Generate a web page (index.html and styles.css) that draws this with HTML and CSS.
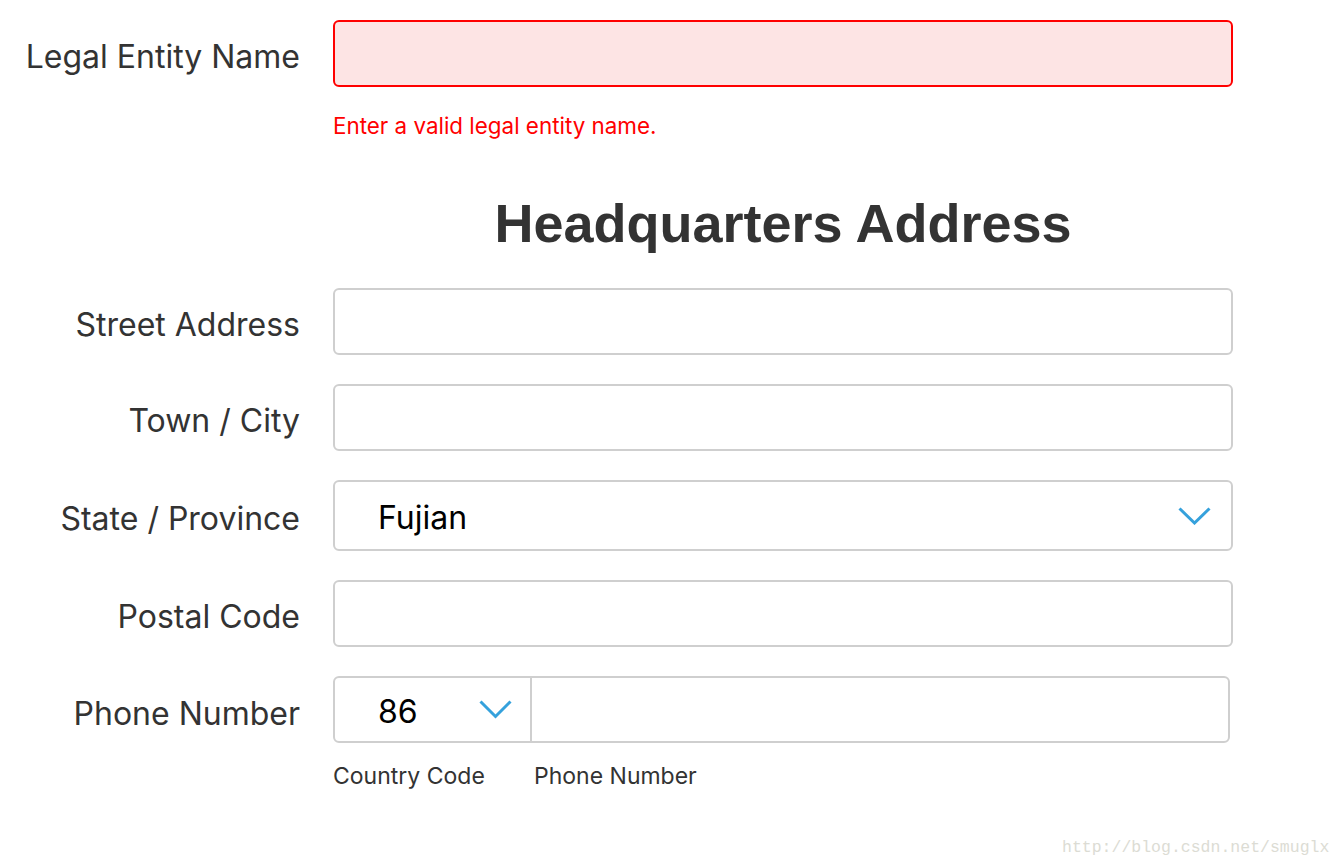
FILE: index.html
```html
<!DOCTYPE html>
<html>
<head>
<meta charset="utf-8">
<link rel="stylesheet" href="styles.css">
</head>
<body>
<div class="form">
  <div class="row row-first">
    <label class="label">Legal Entity Name</label>
    <div class="field">
      <div class="input input-error"></div>
    </div>
  </div>
  <div class="row row-msg">
    <span></span>
    <div class="error-msg">Enter a valid legal entity name.</div>
  </div>

  <div class="row row-heading">
    <span></span>
    <h2 class="heading">Headquarters Address</h2>
  </div>

  <div class="row">
    <label class="label">Street Address</label>
    <div class="field"><div class="input"></div></div>
  </div>
  <div class="row">
    <label class="label">Town / City</label>
    <div class="field"><div class="input"></div></div>
  </div>
  <div class="row">
    <label class="label">State / Province</label>
    <div class="field">
      <div class="input select">
        <span class="select-value">Fujian</span>
        <svg class="chevron" width="33" height="18" viewBox="0 0 33 18"><path d="M1.5 1.5 L16.5 16 L31.5 1.5" fill="none" stroke="#35a1dc" stroke-width="3"/></svg>
      </div>
    </div>
  </div>
  <div class="row">
    <label class="label">Postal Code</label>
    <div class="field"><div class="input"></div></div>
  </div>
  <div class="row row-phone">
    <label class="label">Phone Number</label>
    <div class="field">
      <div class="input phone">
        <div class="cc">
          <span class="select-value">86</span>
          <svg class="chevron" width="33" height="19" viewBox="0 0 33 19"><path d="M1.5 1.5 L16.5 16.5 L31.5 1.5" fill="none" stroke="#35a1dc" stroke-width="3"/></svg>
        </div>
        <div class="num"></div>
      </div>
      <div class="sublabels">
        <span class="sub sub-cc">Country Code</span>
        <span class="sub">Phone Number</span>
      </div>
    </div>
  </div>
</div>
<div class="watermark">http://blog.csdn.net/smuglx</div>
</body>
</html>
```
FILE: styles.css
```css
html, body {
  margin: 0;
  padding: 0;
  background: #fff;
}
body {
  width: 1342px;
  height: 868px;
  position: relative;
  overflow: hidden;
  font-family: Inter, "Open Sans", sans-serif;
  color: #333;
}
.form {
  padding-top: 20px;
  display: flex;
  flex-direction: column;
}
.row {
  display: grid;
  grid-template-columns: 300px 900px;
  column-gap: 33px;
  align-items: center;
  margin-bottom: 29px;
}
.row-first {
  margin-bottom: 0;
}
.label {
  text-align: right;
  font-size: 32px;
  color: #333;
  padding-top: 5px;
}
.input {
  box-sizing: border-box;
  height: 67px;
  border: 2px solid #cfcfcf;
  border-radius: 6px;
  background: #fff;
}
.input-error {
  border-color: #f00;
  background: #fde4e4;
}
.row-msg {
  margin: 25px 0 0;
}
.error-msg {
  color: #f00;
  font-size: 22.4px;
}
.row-heading {
  margin: 52px 0 33px;
}
.heading {
  margin: 0;
  text-align: center;
  font-family: "Liberation Sans", Arial, sans-serif;
  font-weight: bold;
  font-size: 54px;
  color: #333;
  line-height: 64px;
}
.select {
  height: 71px;
  display: flex;
  align-items: center;
  justify-content: space-between;
  padding: 0 20px 0 43px;
}
.select-value {
  font-size: 32px;
  color: #000;
  padding-top: 4px;
}
.chevron {
  display: block;
}
.phone {
  width: 897px;
  display: flex;
}
.cc {
  box-sizing: border-box;
  width: 197px;
  border-right: 2px solid #cfcfcf;
  display: flex;
  align-items: center;
  justify-content: space-between;
  padding: 0 18px 0 43px;
}
.num {
  flex: 1;
}
.row-phone {
  align-items: start;
}
.row-phone .label {
  line-height: 67px;
  padding-top: 0;
  position: relative;
  top: 4px;
}
.sublabels {
  display: flex;
  margin-top: 19px;
  font-size: 23px;
  color: #333;
}
.sub-cc {
  width: 201px;
}
.watermark {
  position: absolute;
  left: 1062px;
  top: 838px;
  font-family: "Liberation Mono", monospace;
  font-size: 16.5px;
  color: #dcdcd4;
}
```
